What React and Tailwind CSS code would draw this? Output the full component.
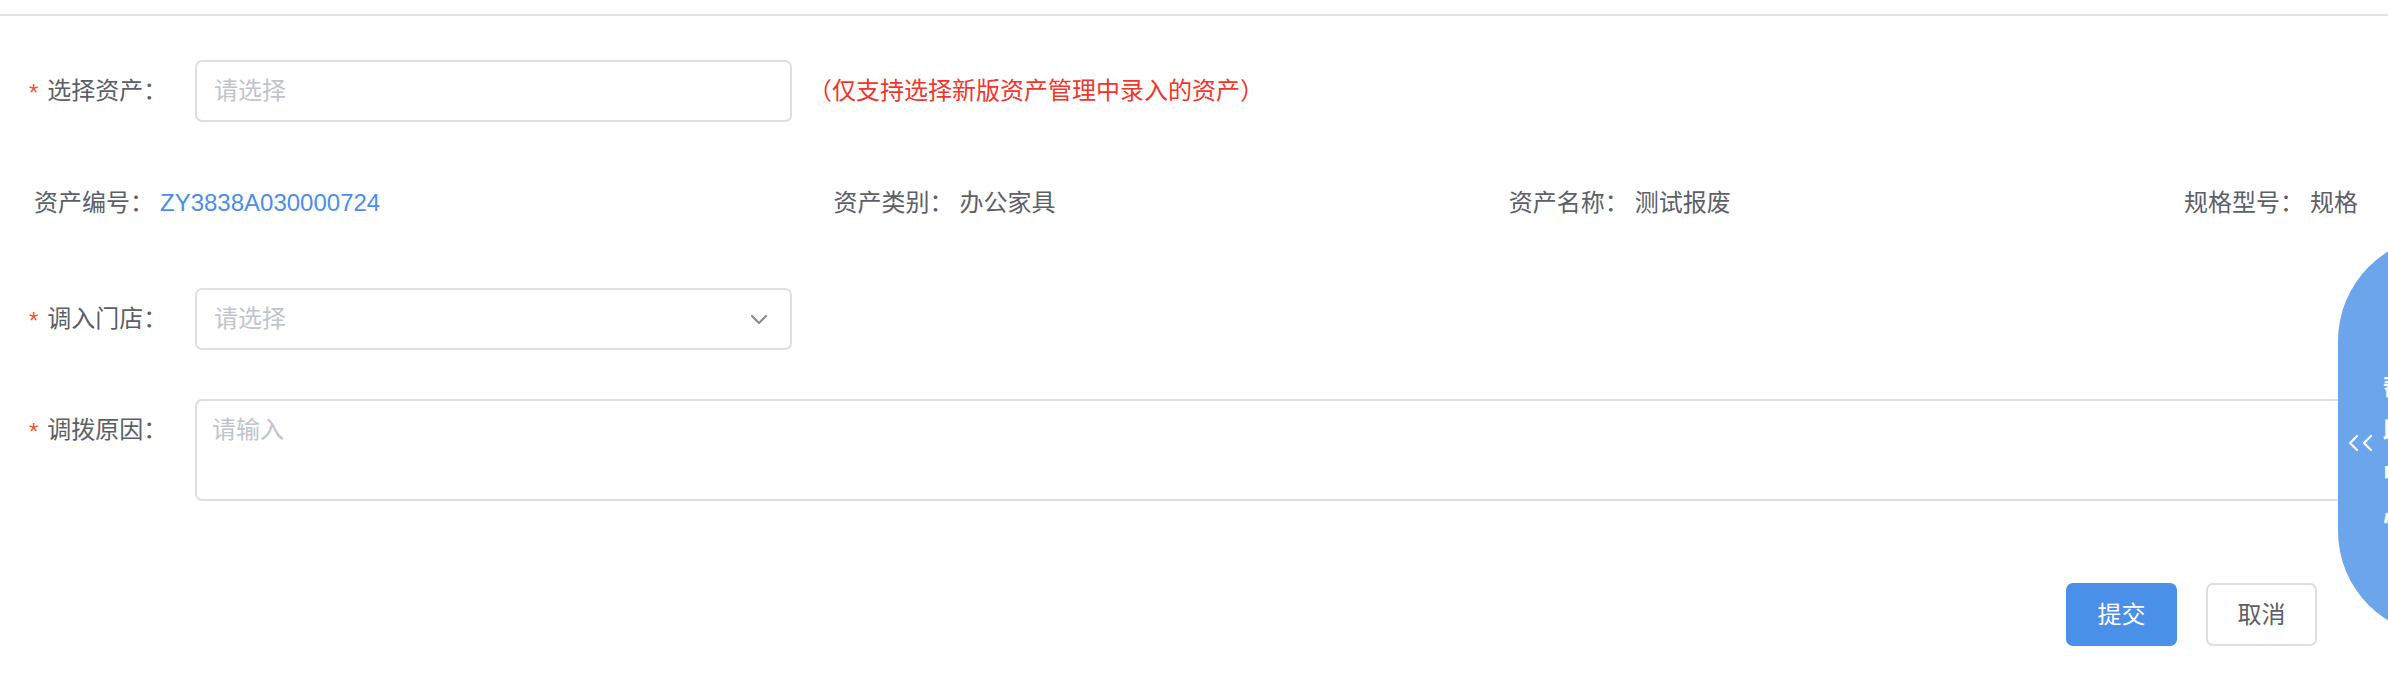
import React from "react";

const FONT = { fontFamily: '"Liberation Sans", "Noto Sans CJK SC", sans-serif' };

function Star() {
  return <span className="text-[#f0532e] text-[24px] mr-[9px] leading-none relative top-[2px]">*</span>;
}

function Label({ children }) {
  return (
    <div className="w-[195px] shrink-0 pl-[29px] flex items-center text-[24px] text-[#5b5f69] whitespace-nowrap">
      <Star />
      <span>{children}</span>
    </div>
  );
}

function InfoItem({ label, value, blue }) {
  return (
    <div className="flex items-center text-[24px] leading-[32px] text-[#5b5f69]">
      <span>{label}</span>
      <span className={blue ? "ml-[6px] text-[#4a8fe7]" : "ml-[6px]"}>{value}</span>
    </div>
  );
}

export default function App() {
  return (
    <div className="relative w-full h-[700px] bg-white overflow-hidden" style={FONT}>
      <div className="h-[14px]" />
      <div className="h-[2px] bg-[#e4e4e6]" />

      {/* Row 1 */}
      <div className="mt-[44px] flex items-center h-[62px]">
        <Label>选择资产：</Label>
        <div className="w-[597px] h-[62px] border-2 border-[#dcdfe6] rounded-[7px] flex items-center px-[17px] text-[24px] text-[#c0c4cc]">
          请选择
        </div>
        <div className="ml-[16px] text-[24px] text-[#f2352b]">（仅支持选择新版资产管理中录入的资产）</div>
      </div>

      {/* Info row */}
      <div className="mt-[65px] flex justify-between pl-[34px] pr-[30px]">
        <InfoItem label="资产编号：" value="ZY3838A030000724" blue />
        <InfoItem label="资产类别：" value="办公家具" />
        <InfoItem label="资产名称：" value="测试报废" />
        <InfoItem label="规格型号：" value="规格" />
      </div>

      {/* Row 3 */}
      <div className="mt-[69px] flex items-center h-[62px]">
        <Label>调入门店：</Label>
        <div className="w-[597px] h-[62px] border-2 border-[#dcdfe6] rounded-[7px] flex items-center justify-between pl-[17px] pr-[22px] text-[24px] text-[#c0c4cc]">
          <span>请选择</span>
          <svg width="18" height="12" viewBox="0 0 18 12" fill="none">
            <polyline points="2,3 9,10 16,3" stroke="#878c96" strokeWidth="2.2" strokeLinecap="round" strokeLinejoin="round" />
          </svg>
        </div>
      </div>

      {/* Row 4 */}
      <div className="mt-[49px] flex items-start">
        <div className="w-[195px] shrink-0 pl-[29px] pt-[13px] flex items-center text-[24px] text-[#5b5f69] whitespace-nowrap">
          <Star />
          <span>调拨原因：</span>
        </div>
        <div className="w-[2220px] shrink-0 h-[102px] border-2 border-[#dcdfe6] rounded-[7px] px-[15px] pt-[11px] text-[24px] text-[#c0c4cc]">
          请输入
        </div>
      </div>

      {/* Buttons */}
      <div className="mt-[82px] flex justify-end pr-[71px] gap-[29px]">
        <button className="w-[111px] h-[63px] rounded-[7px] bg-[#4a8fe8] text-white text-[24px]">提交</button>
        <button className="w-[111px] h-[63px] rounded-[7px] border-2 border-[#dcdfe6] bg-white text-[#5b5f69] text-[24px]">取消</button>
      </div>

      {/* Help bubble */}
      <div className="absolute left-[2338px] top-[236px] w-[210px] h-[400px] rounded-full bg-[#6ca5ec] flex items-center">
        <svg className="ml-[9px] mt-[14px]" width="28" height="18" viewBox="0 0 28 18" fill="none">
          <polyline points="10,2 3,9 10,16" stroke="white" strokeWidth="2.2" strokeLinecap="round" strokeLinejoin="round" />
          <polyline points="24,2 17,9 24,16" stroke="white" strokeWidth="2.2" strokeLinecap="round" strokeLinejoin="round" />
        </svg>
        <div className="ml-[8px] flex flex-col text-white font-bold text-[24px] leading-[43px] mt-[32px]">
          <span>帮</span>
          <span>助</span>
          <span>中</span>
          <span>心</span>
        </div>
      </div>
    </div>
  );
}
